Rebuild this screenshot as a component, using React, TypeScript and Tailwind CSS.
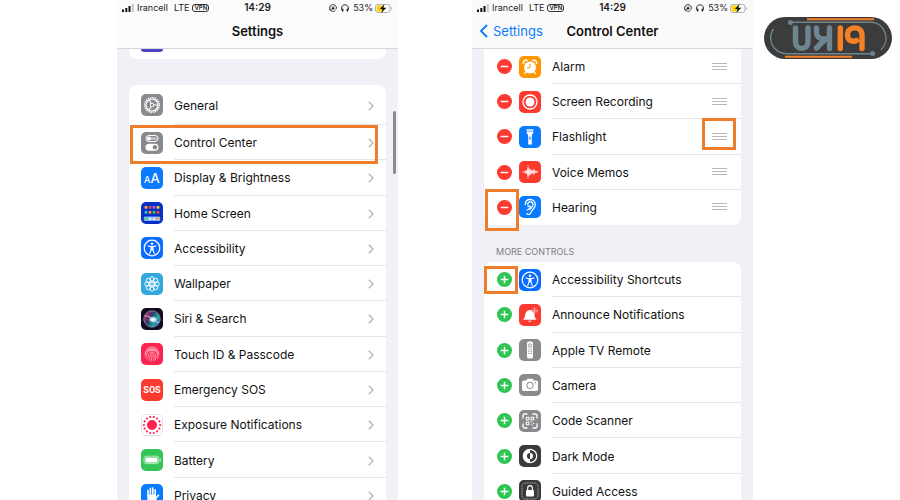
import type { ReactNode } from "react";
import { clsx } from "clsx";

const ORANGE_FRAME = "absolute border-3 border-[#ed7d2b] pointer-events-none";

const Tile = ({ bg, children }: { bg: string; children?: ReactNode }) => (
  <svg
    viewBox="0 0 22 22"
    className={clsx("h-[22px] w-[22px] shrink-0 rounded-[5px]", bg)}
    fill="none"
    stroke="white"
    aria-hidden="true"
  >
    {children}
  </svg>
);

const ring = (count: number, r: number) =>
  Array.from({ length: count }, (_, i) => {
    const a = (i / count) * Math.PI * 2;
    return { x: 11 + r * Math.cos(a), y: 11 + r * Math.sin(a) };
  });

const GearIcon = () => (
  <Tile bg="bg-[#8a8a8e]">
    <circle cx="11" cy="11" r="7.3" strokeWidth="1.7" strokeDasharray="1.3 1" />
    <circle cx="11" cy="11" r="6" strokeWidth="1.2" />
    <circle cx="11" cy="11" r="1.8" strokeWidth="0.9" />
    <path d="M12.8 11H17M10.1 9.4L8 5.8M10.1 12.6L8 16.2" strokeWidth="1.1" />
  </Tile>
);

const TogglesIcon = () => (
  <Tile bg="bg-[#8a8a8e]">
    <rect x="5" y="3.5" width="12" height="6" rx="3" strokeWidth="1" />
    <circle cx="8" cy="6.5" r="2" fill="white" stroke="none" />
    <path d="M10.5 6.5h4" strokeWidth="2.5" strokeLinecap="round" opacity="0.5" />
    <rect x="4.5" y="11.8" width="13" height="7" rx="3.5" fill="white" stroke="none" />
    <circle cx="14" cy="15.3" r="2.3" fill="#8a8a8e" stroke="none" />
  </Tile>
);

const TextSizeIcon = () => (
  <Tile bg="bg-[#0a7aff]">
    <text x="3" y="15.5" fill="white" stroke="none" fontSize="9" fontWeight="500">
      A
    </text>
    <text x="9.5" y="15.5" fill="white" stroke="none" fontSize="13" fontWeight="500">
      A
    </text>
  </Tile>
);

const dots = [
  ["#ffb340", "#ff453a", "#bf5af2", "#ffd60a"],
  ["#35c8e8", "#ff9f0a", "#34c759", "#ff453a"],
];

const HomeScreenIcon = () => (
  <Tile bg="bg-[#0a2fc4]">
    {dots.map((row, y) =>
      row.map((color, x) => (
        <rect
          key={`${x}-${y}`}
          x={3.6 + x * 4}
          y={4 + y * 5}
          width="2.8"
          height="2.8"
          rx="0.7"
          fill={color}
          stroke="none"
        />
      )),
    )}
    <rect x="2.8" y="14.5" width="16.4" height="4.4" rx="1" fill="#7fb0ff" stroke="none" />
    <path d="M3.8 16.7h2.6" stroke="#4cd964" strokeWidth="2.6" />
    <path d="M7.8 16.7h2.6M11.8 16.7h2.6" stroke="#dce9ff" strokeWidth="2.6" />
    <path d="M15.8 16.7h2.6" stroke="#ffb340" strokeWidth="2.6" />
  </Tile>
);

const AccessibilityIcon = () => (
  <Tile bg="bg-[#0a6cff]">
    <circle cx="11" cy="11" r="7.8" strokeWidth="1.2" />
    <circle cx="11" cy="6.7" r="1.3" fill="white" stroke="none" />
    <path
      d="M7 9l3 .6v3.2L8.8 16.4M15 9l-3 .6v3.2l1.2 3.6M10 9.6h2M10 12.8h2M11 9v4"
      strokeWidth="1.1"
      strokeLinecap="round"
    />
  </Tile>
);

const WallpaperIcon = () => (
  <Tile bg="bg-[#32a8dc]">
    {ring(8, 4.9).map((p) => (
      <circle key={`${p.x},${p.y}`} cx={p.x} cy={p.y} r="2.3" strokeWidth="0.9" />
    ))}
    {ring(6, 2.4).map((p) => (
      <circle key={`${p.x},${p.y}`} cx={p.x} cy={p.y} r="1.1" strokeWidth="0.7" />
    ))}
  </Tile>
);

const SiriIcon = () => (
  <Tile bg="bg-[#150c24]">
    <defs>
      <linearGradient id="siri" x1="0" y1="0.2" x2="1" y2="0.8">
        <stop offset="0" stopColor="#e0245e" />
        <stop offset="0.4" stopColor="#2c3a6e" />
        <stop offset="0.7" stopColor="#1fa7a0" />
        <stop offset="1" stopColor="#2b62d9" />
      </linearGradient>
      <radialGradient id="siri-core">
        <stop offset="0" stopColor="#ffffff" />
        <stop offset="0.4" stopColor="#e4f6ff" />
        <stop offset="1" stopColor="#8fd8ff" stopOpacity="0" />
      </radialGradient>
    </defs>
    <circle cx="11" cy="11" r="8.2" fill="url(#siri)" stroke="#86939f" strokeWidth="0.8" />
    <ellipse cx="12" cy="11.5" rx="5" ry="3.6" fill="url(#siri-core)" stroke="none" />
    <path d="M4 8c3-.5 5 1 8 3.5s4 3 6 3" stroke="#ffd5e2" strokeWidth="0.8" />
  </Tile>
);

const FingerprintIcon = () => (
  <Tile bg="bg-[#fb2350]">
    <g stroke="#ffc4cf" strokeWidth="0.8" strokeLinecap="round">
      <path d="M5.5 6.5c3-3.4 8-3.4 11 0M4.2 9.5c2-5 11.6-5 13.6 0" />
      <path d="M4 12c0-7.5 14-7.5 14 0M4.6 14.2c1-1.5.6-6.6 6.4-6.6s6.4 4 5.6 7.4" />
      <path d="M6 16c1.8-2 .8-6.800 5-6.800s4.400 4.400 3.400 7.800" />
      <path d="M7.800 17.300c1.800-2 .8-6.500 3.200-6.500s2.600 3.600 1.400 7.200M9.800 18.200c1.200-2 1.200-3.600 1.200-5.800" />
    </g>
  </Tile>
);

const SosIcon = () => (
  <Tile bg="bg-[#fc3a30]">
    <text
      x="11"
      y="14"
      textAnchor="middle"
      fill="white"
      stroke="none"
      fontSize="9"
      className="font-['Roboto','Liberation_Sans',sans-serif] font-bold"
    >
      SOS
    </text>
  </Tile>
);

const ExposureIcon = () => (
  <Tile bg="bg-white border border-[#e4e4e6]">
    <circle cx="11" cy="11" r="5.5" fill="#fb2350" stroke="none" />
    {ring(14, 9).map((p) => (
      <circle key={`${p.x},${p.y}`} cx={p.x} cy={p.y} r="1.2" fill="#fb2350" stroke="none" />
    ))}
  </Tile>
);

const BatteryIcon = () => (
  <Tile bg="bg-[#34c558]">
    <rect x="3" y="7.2" width="14.8" height="7.4" rx="2.2" stroke="#b4ecc2" strokeWidth="1" />
    <rect x="4.3" y="8.4" width="12.2" height="5" rx="1" fill="white" stroke="none" />
    <path d="M19.2 9.8v2.4" stroke="#b4ecc2" strokeWidth="1.2" strokeLinecap="round" />
  </Tile>
);

const HandIcon = () => (
  <Tile bg="bg-[#0a7aff]">
    <g strokeWidth="1.6" strokeLinecap="round">
      <path d="M7 11V6.2M9.4 10V4.2M11.8 10V4M14.2 11V5.8M14.5 14.5l3-3.3" />
    </g>
    <path d="M6.2 10.5h8.8v2.8l1 1c-1.5 3-3 4.5-5.2 4.5-3 0-4.600-2.300-4.600-5z" fill="white" stroke="none" />
  </Tile>
);

const AlarmIcon = () => (
  <Tile bg="bg-[#ff9500]">
    <circle cx="11" cy="11.5" r="6" fill="white" stroke="none" />
    <path d="M4.5 7.5c-.8-2 1.5-4.2 3.5-3M17.5 7.5c.8-2-1.500-4.200-3.500-3" strokeWidth="1.6" strokeLinecap="round" />
    <path d="M7 16l-1.3 1.6M15 16l1.3 1.6" strokeWidth="1.3" strokeLinecap="round" />
    <path d="M11 7.8v4H8.2" stroke="#ff9500" strokeWidth="1" />
  </Tile>
);

const RecordIcon = () => (
  <Tile bg="bg-[#fc3a30]">
    <circle cx="11" cy="11" r="7" strokeWidth="1.3" />
    <circle cx="11" cy="11" r="4.5" fill="white" stroke="none" />
  </Tile>
);

const FlashlightIcon = () => (
  <Tile bg="bg-[#0a7aff]">
    <path d="M7.5 3.3h7v1.4h-7z" fill="white" stroke="none" />
    <path d="M7.5 5.5h7c0 2.3-1.7 2.6-1.7 4.6v8.3H9.2v-8.3c0-2-1.7-2.3-1.7-4.6z" fill="white" stroke="none" />
    <path d="M11 11v2.2" stroke="#0a7aff" strokeWidth="1.2" strokeLinecap="round" />
  </Tile>
);

const WaveIcon = () => (
  <Tile bg="bg-[#fc3a30]">
    <path
      d="M2.800 11L5 10.200l1.200.2L7 8.500l.8 1.500L9 3.800l1 4.700L11 7l1 3 .8-1.500.9 1.500 1.300-2.500 1.200 2.500 1.300-.3L19.300 11l-2.100.8-1.200-.3-1 2.500-1.300-2-.9 1.500-.8-1.500-1 3-1-1.500-1 4.700L7.800 12 7 13.500l-.8-1.900-1.200.2z"
      fill="#ffdedb"
      stroke="none"
    />
  </Tile>
);

const EarIcon = () => (
  <Tile bg="bg-[#0a7aff]">
    <g strokeWidth="1.3" strokeLinecap="round">
      <path d="M6.3 8.5C6.3 5.3 8.5 3.5 11.3 3.5s5 2.2 5 5.2c0 4.3-3.5 4.6-4.3 7.6-.5 2-2.8 2.8-4.3 1.5" />
      <path d="M8.7 8.5c0-1.6 1.2-2.7 2.7-2.7s2.6 1.2 2.6 2.8c0 2.200-1.600 2.800-2.500 4.400" />
      <path d="M9 10.5c1.6-1.300 3 .2 2 1.700s-2 1.800-2.800 1.700" />
    </g>
  </Tile>
);

const BellIcon = () => (
  <Tile bg="bg-[#fc3a30]">
    <path d="M4 15.8c2.3-1.8 1.5-4.4 2.8-7C7.5 7.3 9 6 10.7 6c2.2 0 4 1.5 4.6 4 .4 2 .4 4 2.4 5.8z" fill="white" stroke="none" />
    <path d="M9 16.8c.7 1.5 2.9 1.5 3.6 0z" fill="white" stroke="none" />
    <path d="M12.5 6v1.5M14 4.5v4M15.5 3v7M17 4.5v4M18.5 6v1.5" stroke="#ffb5b0" strokeWidth="0.9" />
  </Tile>
);

const RemoteIcon = () => (
  <Tile bg="bg-[#8a8a8e]">
    <rect x="8" y="2.5" width="6" height="17" rx="1.5" fill="white" stroke="none" />
    <circle cx="11" cy="6.5" r="1.7" stroke="#8a8a8e" strokeWidth="0.9" />
    <path
      d="M9.3 10h1.2M11.7 10h1.2M9.3 12.2h1.2M11.7 12.2h1.2M9.3 14.4h1.2M11.7 14.4h1.2"
      stroke="#8a8a8e"
      strokeWidth="1.2"
    />
  </Tile>
);

const CameraIcon = () => (
  <Tile bg="bg-[#8a8a8e]">
    <path
      d="M4.8 6.5h2.4l1.2-1.8h5.2l1.2 1.8h2.4c1 0 1.8.8 1.8 1.8v7c0 1-.8 1.7-1.8 1.7H4.8C3.8 17 3 16.3 3 15.3v-7c0-1 .8-1.8 1.8-1.8z"
      fill="white"
      stroke="none"
    />
    <circle cx="11" cy="11.4" r="3.2" stroke="#8a8a8e" strokeWidth="1" />
    <circle cx="16.4" cy="8.8" r="0.7" fill="#8a8a8e" stroke="none" />
  </Tile>
);

const CodeIcon = () => (
  <Tile bg="bg-[#8a8a8e]">
    <path
      d="M4 8V6a2 2 0 012-2h2M14 4h2a2 2 0 012 2v2M18 14v2a2 2 0 01-2 2h-2M8 18H6a2 2 0 01-2-2v-2"
      strokeWidth="1.3"
      strokeLinecap="round"
    />
    <g strokeWidth="1">
      <rect x="7.3" y="7.3" width="2.6" height="2.6" />
      <rect x="12.1" y="7.3" width="2.6" height="2.6" />
      <rect x="7.3" y="12.1" width="2.6" height="2.6" />
      <path d="M11.8 12h1.5M14 13.5h1.3M12 15h1.3" />
    </g>
  </Tile>
);

const DarkModeIcon = () => (
  <Tile bg="bg-[#3a3a3c]">
    <circle cx="11" cy="11" r="6.7" strokeWidth="1.2" />
    <path d="M11 4.5a6.5 6.5 0 000 13v-3.4a3.1 3.1 0 010-6.2z" fill="white" stroke="none" />
    <path d="M11 7.9a3.1 3.1 0 010 6.2z" fill="white" stroke="none" />
  </Tile>
);

const LockIcon = () => (
  <Tile bg="bg-[#3a3a3c]">
    <rect x="3" y="3" width="16" height="16" rx="3.5" stroke="#c9c9cb" strokeWidth="0.8" strokeDasharray="1 0.6" />
    <rect x="7" y="10" width="8" height="6.5" rx="1" fill="white" stroke="none" />
    <path d="M8.7 10V8a2.3 2.3 0 014.6 0v2" strokeWidth="1.2" />
  </Tile>
);

const settings = [
  { label: "Control Center", icon: <TogglesIcon />, framed: true },
  { label: "Display & Brightness", icon: <TextSizeIcon /> },
  { label: "Home Screen", icon: <HomeScreenIcon /> },
  { label: "Accessibility", icon: <AccessibilityIcon /> },
  { label: "Wallpaper", icon: <WallpaperIcon /> },
  { label: "Siri & Search", icon: <SiriIcon /> },
  { label: "Touch ID & Passcode", icon: <FingerprintIcon /> },
  { label: "Emergency SOS", icon: <SosIcon /> },
  { label: "Exposure Notifications", icon: <ExposureIcon /> },
  { label: "Battery", icon: <BatteryIcon /> },
  { label: "Privacy", icon: <HandIcon /> },
];

const included = [
  { label: "Alarm", icon: <AlarmIcon /> },
  { label: "Screen Recording", icon: <RecordIcon /> },
  { label: "Flashlight", icon: <FlashlightIcon />, frameHandle: true },
  { label: "Voice Memos", icon: <WaveIcon /> },
  { label: "Hearing", icon: <EarIcon />, frameToggle: true },
];

const more = [
  { label: "Accessibility Shortcuts", icon: <AccessibilityIcon />, frameToggle: true },
  { label: "Announce Notifications", icon: <BellIcon /> },
  { label: "Apple TV Remote", icon: <RemoteIcon /> },
  { label: "Camera", icon: <CameraIcon /> },
  { label: "Code Scanner", icon: <CodeIcon /> },
  { label: "Dark Mode", icon: <DarkModeIcon /> },
  { label: "Guided Access", icon: <LockIcon /> },
];

const StatusBar = () => (
  <div className="grid h-4 grid-cols-[1fr_auto_1fr] items-center px-[5px] text-[9px] text-[#1c1c1e]">
    <div className="flex items-center">
      <svg viewBox="0 0 12 8" className="h-2 w-3" aria-hidden="true">
        <path d="M0 5.5h2V8H0zM3.3 4h2v4h-2zM6.5 2h2v6h-2z" fill="#111" />
        <path d="M9.8 0h2v8h-2z" fill="#c9c9cb" />
      </svg>
      <span className="ml-[3px]">Irancell</span>
      <span className="ml-[6px]">LTE</span>
      <span className="ml-[3px] flex h-2 items-center rounded-[3px] border border-[#333] px-px text-[6px] font-semibold">
        VPN
      </span>
    </div>
    <span className="text-[10px] font-semibold">14:29</span>
    <div className="flex items-center justify-end">
      <svg viewBox="0 0 8 8" className="h-2 w-2" fill="none" stroke="#222" strokeWidth="0.9" aria-hidden="true">
        <path d="M1.5 6.3A3.4 3.4 0 117 5.5M.6 5l.9 1.5L3 5.8M2.5 7.2c1.5.7 3 .3 4-.8" />
        <rect x="2.7" y="3.5" width="2.6" height="2" fill="#222" stroke="none" />
        <path d="M3.2 3.6c0-1.5 1.6-1.5 1.6 0" strokeWidth="0.6" />
      </svg>
      <svg viewBox="0 0 8 8" className="ml-1 h-2 w-2" fill="none" stroke="#222" aria-hidden="true">
        <path d="M1 6.5C-.3 2.5 1.8.8 4 .8s4.3 1.7 3 5.7" strokeWidth="1" />
        <path d="M1.7 4.8v2.8M6.3 4.8v2.8" strokeWidth="1.4" />
      </svg>
      <span className="ml-1">53%</span>
      <svg viewBox="0 0 18 9" className="ml-[2px] h-[9px] w-[18px]" fill="none" aria-hidden="true">
        <rect x="0.5" y="0.5" width="14.5" height="8" rx="2.5" stroke="#a8a8aa" strokeWidth="0.9" />
        <path d="M3 1.5h4.5v6H3a1.3 1.3 0 01-1.3-1.3V2.8A1.3 1.3 0 013 1.5z" fill="#fdd000" />
        <path d="M16.3 3c1.3.4 1.3 2.6 0 3z" fill="#a8a8aa" />
        <path d="M9.5 0L4.8 5h2.7L6.3 9l5-5.2H8.4z" fill="#111" />
      </svg>
    </div>
  </div>
);

const SettingRow = ({ label, icon, framed }: { label: string; icon: ReactNode; framed?: boolean }) => (
  <li className="relative">
    <button type="button" className="flex h-full w-full items-center pl-3 text-left">
      {icon}
      <span className="ml-[11px] flex h-full flex-1 items-center justify-between border-b border-[#e6e6e8] pt-0.5 pr-3">
        {label}
        <svg
          viewBox="0 0 6 10"
          className="h-[10px] w-[6px]"
          fill="none"
          stroke="#b4b4b8"
          strokeWidth="1.3"
          aria-hidden="true"
        >
          <path d="M0.8 0.8L5 5 0.8 9.2" />
        </svg>
      </span>
    </button>
    {framed && <span className={clsx(ORANGE_FRAME, "top-0 right-2 left-px z-10 h-[39px]")} />}
  </li>
);

type ControlProps = {
  label: string;
  icon: ReactNode;
  added?: boolean;
  frameToggle?: boolean;
  frameHandle?: boolean;
};

const ControlRow = ({ label, icon, added, frameToggle, frameHandle }: ControlProps) => (
  <li className="group relative flex items-center pl-[13px]">
    <button type="button" aria-label={`${added ? "Remove" : "Add"} ${label}`} className="h-[15px] w-[15px] shrink-0">
      <svg viewBox="0 0 15 15" className="h-[15px] w-[15px]" stroke="white" strokeWidth="1.5">
        <circle cx="7.5" cy="7.5" r="7.5" fill={added ? "#fc3a30" : "#2fc552"} stroke="none" />
        <path d={added ? "M3.7 7.5h7.6" : "M3.7 7.5h7.6M7.5 3.7v7.6"} />
      </svg>
    </button>
    <span className="ml-[7px]">{icon}</span>
    <span className="ml-[11px] flex h-full flex-1 items-center justify-between border-b border-[#e6e6e8] pt-0.5 pr-[14px] group-last:border-transparent">
      {label}
      {added && (
        <button type="button" aria-label={`Reorder ${label}`} className="flex w-[15px] flex-col gap-[2px] pb-0.5">
          <span className="h-px bg-[#b8b8bc]" />
          <span className="h-px bg-[#b8b8bc]" />
          <span className="h-px bg-[#b8b8bc]" />
        </button>
      )}
    </span>
    {frameToggle && (
      <span
        className={clsx(ORANGE_FRAME, added ? "-top-px left-px h-[42px] w-[34px]" : "top-1 left-0 h-7 w-[34px]")}
      />
    )}
    {frameHandle && <span className={clsx(ORANGE_FRAME, "-top-px right-[5px] h-8 w-[34px]")} />}
  </li>
);

const Logo = () => (
  <svg
    viewBox="0 0 128 42"
    className="mt-[17px] ml-[11px] h-[42px] w-[128px]"
    fill="none"
    role="img"
    aria-label="Logo"
  >
    <rect width="128" height="42" rx="21" fill="#3d3c3c" />
    <path d="M43 2.2h67M21 39.8h67" stroke="#f58026" strokeWidth="2" />
    <g stroke="#6d8590" strokeWidth="1.4">
      <path d="M26 5.3h81c14 0 20 18 10 27.5" />
      <path d="M108 36.7H24C8 36.7 3 22 9.5 12" />
    </g>
    <circle cx="26.5" cy="5.5" r="2.5" fill="#6d8590" />
    <circle cx="108.5" cy="36.5" r="2.5" fill="#6d8590" />
    <g strokeWidth="5.4" strokeLinecap="round" strokeLinejoin="round">
      <path d="M31.5 11v14c0 8.5 12.5 8.5 12.5 0V11" stroke="#6d8590" />
      <path d="M65.5 11v20.5M52.5 11v4.5c0 4 3 6.5 7 6.5h6M61 22.5l-8.5 8.5" stroke="#6d8590" />
      <path d="M76.3 11v20.5M98 31.5V18c0-9.5-14.5-9.5-14.5 0 0 6.5 6 7 9 5.5" stroke="#f58026" />
    </g>
  </svg>
);

const App = () => {
  return (
    <main className="grid h-screen grid-cols-[117fr_281fr_74fr_281fr_147fr] overflow-hidden bg-white font-['Inter','Liberation_Sans',sans-serif] text-xs text-[#111]">
      <section className="relative col-start-2 flex min-h-0 flex-col bg-[#f1f0f6]">
        <header className="z-10 h-[49px] shrink-0 border-b border-[#d8d8dc] bg-[#fbfbfc]">
          <StatusBar />
          <h1 className="flex h-[31px] items-center justify-center text-[13px] font-semibold">Settings</h1>
        </header>
        <div className="min-h-0 flex-1 overflow-hidden px-3">
          <div className="h-[10px] overflow-hidden rounded-b-lg bg-white pl-3">
            <div className="h-[3px] w-[22px] rounded-b-[5px] bg-[#4a45c6]" />
          </div>
          <div className="mt-[26px] rounded-t-lg bg-white">
            <ul className="grid min-h-10">
              <SettingRow label="General" icon={<GearIcon />} />
            </ul>
            <ul className="grid min-h-[388px] auto-rows-fr">
              {settings.map((item) => (
                <SettingRow key={item.label} {...item} />
              ))}
            </ul>
          </div>
        </div>
        <span className="absolute top-[111px] right-[2px] h-[63px] w-[3px] rounded-full bg-[#8a8a8e]" />
      </section>

      <section className="col-start-4 flex min-h-0 flex-col bg-[#f1f0f6]">
        <header className="h-[49px] shrink-0 border-b border-[#d8d8dc] bg-[#fbfafa]">
          <StatusBar />
          <div className="grid h-[31px] grid-cols-[1fr_auto_1fr] items-center text-[13px]">
            <a href="#settings" className="flex items-center pl-[7px] text-[#0a7aff]">
              <svg
                viewBox="0 0 9 14"
                className="mr-[5px] h-[14px] w-[9px]"
                fill="none"
                stroke="#0a7aff"
                strokeWidth="1.8"
                aria-hidden="true"
              >
                <path d="M8 1L2 7l6 6" />
              </svg>
              Settings
            </a>
            <h1 className="font-semibold">Control Center</h1>
          </div>
        </header>
        <div className="min-h-0 flex-1 overflow-hidden px-3">
          <ul className="grid min-h-[176px] auto-rows-fr rounded-b-lg bg-white">
            {included.map((item) => (
              <ControlRow key={item.label} added {...item} />
            ))}
          </ul>
          <h2 className="flex h-[37px] items-end pb-1 pl-3 text-[9px] text-[#7d7d82]">MORE CONTROLS</h2>
          <ul className="grid min-h-[247px] auto-rows-fr rounded-t-lg bg-white">
            {more.map((item) => (
              <ControlRow key={item.label} {...item} />
            ))}
          </ul>
        </div>
      </section>

      <Logo />
    </main>
  );
};

export default App;
